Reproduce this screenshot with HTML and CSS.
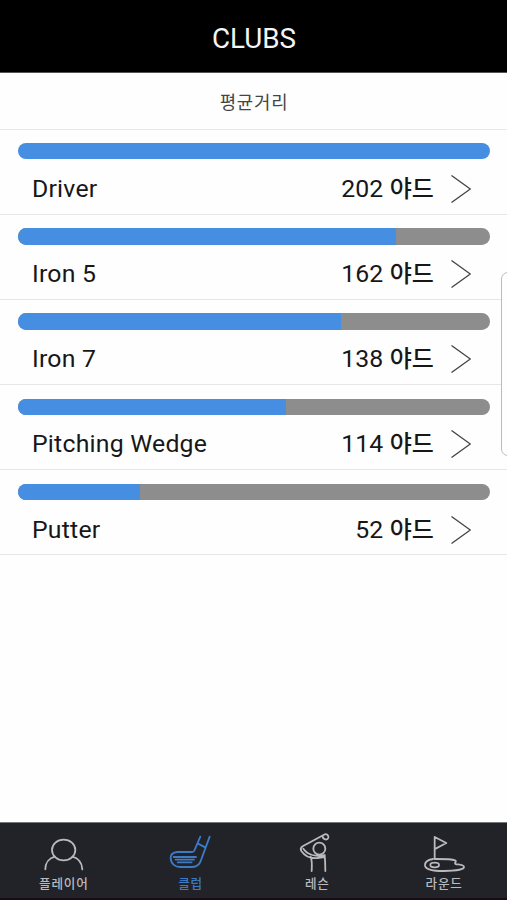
FILE: index.html
```html
<!DOCTYPE html>
<html lang="ko">
<head>
<meta charset="utf-8">
<meta name="viewport" content="width=device-width, initial-scale=1">
<title>Clubs</title>
<link rel="stylesheet" href="styles.css">
</head>
<body>
<div class="app">
  <header class="header"><h1 class="title">CLUBS</h1></header>
  <h2 class="subtitle">평균거리</h2>
  <main class="clubs">
    <div class="club">
      <div class="bar"><div class="fill" style="width:100%"></div></div>
      <div class="info"><span class="name">Driver</span><span class="distance">202 <span class="unit">야드</span></span><svg class="chevron" viewBox="0 0 20 28"><path d="M.5 .5 19.3 14 .5 27.5"/></svg></div>
    </div>
    <div class="club">
      <div class="bar"><div class="fill" style="width:80%"></div></div>
      <div class="info"><span class="name">Iron 5</span><span class="distance">162 <span class="unit">야드</span></span><svg class="chevron" viewBox="0 0 20 28"><path d="M.5 .5 19.3 14 .5 27.5"/></svg></div>
    </div>
    <div class="club">
      <div class="bar"><div class="fill" style="width:68.5%"></div></div>
      <div class="info"><span class="name">Iron 7</span><span class="distance">138 <span class="unit">야드</span></span><svg class="chevron" viewBox="0 0 20 28"><path d="M.5 .5 19.3 14 .5 27.5"/></svg></div>
    </div>
    <div class="club">
      <div class="bar"><div class="fill" style="width:56.7%"></div></div>
      <div class="info"><span class="name">Pitching Wedge</span><span class="distance">114 <span class="unit">야드</span></span><svg class="chevron" viewBox="0 0 20 28"><path d="M.5 .5 19.3 14 .5 27.5"/></svg></div>
    </div>
    <div class="club">
      <div class="bar"><div class="fill" style="width:25.9%"></div></div>
      <div class="info"><span class="name">Putter</span><span class="distance">52 <span class="unit">야드</span></span><svg class="chevron" viewBox="0 0 20 28"><path d="M.5 .5 19.3 14 .5 27.5"/></svg></div>
    </div>
  </main>
  <nav class="tabs">
    <a class="tab">
      <svg class="icon" viewBox="100 45 180 132"><ellipse cx="192" cy="105" rx="35" ry="31"/><path d="M137 163C137 143 149 129 166 125M218 125C236 129 247 144 248 163"/></svg>
      <span class="label">플레이어</span>
    </a>
    <a class="tab active">
      <svg class="icon" viewBox="100 45 180 132"><path d="M221 65 203 107Q201 111 196 111H152Q132 113 132 128C132 146 145 156 161 156H195Q213 156 221 141L249 65M214 86 237 98M141 126H208M147 134H202M153 142H195"/></svg>
      <span class="label">클럽</span>
    </a>
    <a class="tab">
      <svg class="icon" viewBox="100 45 180 132"><path d="M211 59 147 94Q138 100 143 108C154 124 172 131 191 129L211 126M211 59C218 55 226 61 224 68 221 77 208 74 207 64M149 101Q159 115 176 120 196 125 213 120 215 140 215 168M171 125Q176 138 174 168"/><circle cx="197" cy="101" r="18"/></svg>
      <span class="label">레슨</span>
    </a>
    <a class="tab">
      <svg class="icon" viewBox="100 45 180 132"><path d="M162 132V66L197 84 165 101M157 132C139 135 132 143 133 152 136 164 160 168 189 168 222 168 250 164 250 156 250 149 237 149 228 148 216 145 231 140 223 136 214 132 190 132 166 132"/><ellipse cx="162" cy="150" rx="13" ry="7"/></svg>
      <span class="label">라운드</span>
    </a>
  </nav>
  <div class="edge-panel"></div>
</div>
</body>
</html>
```
FILE: styles.css
```css
* { box-sizing: border-box; }

body {
  margin: 0;
  background: #fefefe;
  color: #171717;
  font-family: Roboto, "Noto Sans CJK KR", sans-serif;
}

.app {
  position: relative;
  display: flex;
  flex-direction: column;
  height: 900px;
  overflow: hidden;
}

.header {
  display: flex;
  align-items: center;
  justify-content: center;
  height: 73px;
  padding: 6px 0 0 1px;
  background: #000;
  border-bottom: 1px solid #555;
}

.title {
  margin: 0;
  color: #f4f4f4;
  font-size: 27.8px;
  font-weight: 400;
  line-height: 34px;
}

.subtitle {
  display: flex;
  align-items: center;
  justify-content: center;
  height: 56.5px;
  margin: 0;
  padding-left: 1px;
  border-bottom: 1px solid #e8e8e8;
  color: #444;
  font-size: 17.8px;
  font-weight: 400;
  letter-spacing: .8px;
}

.clubs { flex: 1; }

.club {
  height: 85.2px;
  padding: 13.6px 17px 0 18px;
  border-bottom: 1px solid #e6e6e6;
}

.bar {
  height: 16.4px;
  overflow: hidden;
  border-radius: 8.2px;
  background: #8d8d8d;
}

.fill {
  height: 100%;
  background: #468ee2;
}

.info {
  display: flex;
  align-items: center;
  height: 30px;
  margin-top: 14.4px;
  padding: 0 19px 0 14px;
  font-size: 24.8px;
  line-height: 30px;
}

.name {
  flex: 1;
  letter-spacing: .22px;
}

.distance {
  letter-spacing: .1px;
  white-space: pre;
}

.unit {
  font-size: 24px;
  font-weight: 500;
}

.chevron {
  width: 20px;
  height: 28px;
  margin-left: 17px;
  fill: none;
  stroke: #444;
  stroke-width: 1.3;
}

.tabs {
  display: flex;
  height: 78px;
  background: #212329;
  border-top: 1px solid #777;
  border-bottom: 2px solid #180b14;
}

.tab {
  display: flex;
  flex: 1;
  flex-direction: column;
  align-items: center;
  padding-top: 7px;
  color: #b9babd;
}

.tab.active { color: #3d7bc4; }

.icon {
  width: 60px;
  height: 44px;
  fill: none;
  stroke: currentColor;
  stroke-width: 5.4;
  stroke-linecap: round;
  stroke-linejoin: round;
}

.label {
  padding-left: 1px;
  font-size: 12.6px;
  font-weight: 500;
  letter-spacing: .8px;
  line-height: 20px;
}

.edge-panel {
  position: absolute;
  top: 272px;
  right: -12px;
  width: 18px;
  height: 184px;
  border: 1.5px solid #bbb;
  border-radius: 7px;
  background: #fefefe;
}
```
